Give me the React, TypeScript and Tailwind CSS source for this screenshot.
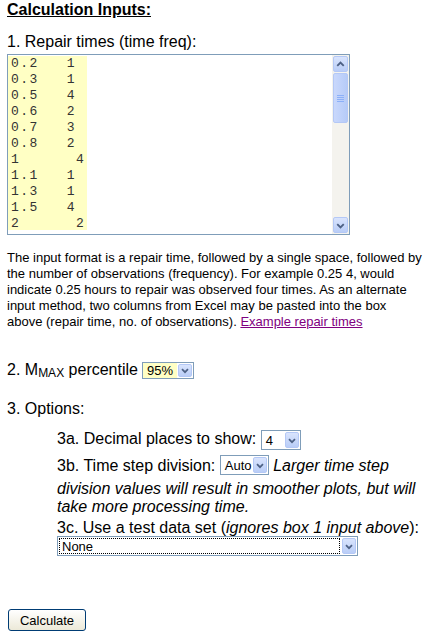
import type { ReactNode } from 'react';

const ROWS = [
  '0.2   1',
  '0.3   1',
  '0.5   4',
  '0.6   2',
  '0.7   3',
  '0.8   2',
  '1      4',
  '1.1   1',
  '1.3   1',
  '1.5   4',
  '2      2',
];

function Chevron({ up }: { up?: boolean }) {
  return (
    <svg width="14" height="15" viewBox="0 0 14 15" className="block">
      <path
        d={up ? 'M3.5 9 L7 5.5 L10.5 9' : 'M3.5 6 L7 9.5 L10.5 6'}
        fill="none"
        stroke="#4d6185"
        strokeWidth="2"
      />
    </svg>
  );
}

function ArrowBtn({ up, className = '' }: { up?: boolean; className?: string }) {
  return (
    <div
      className={`flex shrink-0 items-center justify-center rounded-[2px] border border-[#b4c8f6] bg-gradient-to-b from-[#d9e4fd] to-[#b9cdf7] ${className}`}
    >
      <Chevron up={up} />
    </div>
  );
}

interface SelectProps {
  width: string;
  children: ReactNode;
  tall?: boolean;
  yellow?: boolean;
  focused?: boolean;
}

function Select({ width, children, tall = true, yellow, focused }: SelectProps) {
  return (
    <span
      className={`inline-flex align-middle border border-[#7f9db9] bg-white ${width} ${tall ? 'h-[20px]' : 'h-[17px]'}`}
    >
      <span
        className={`flex-1 flex items-center pl-[4px] text-[13px] leading-none not-italic whitespace-nowrap ${yellow ? 'bg-[#ffffc4]' : ''} ${focused ? 'outline outline-1 outline-dotted outline-black -outline-offset-2' : ''}`}
      >
        {children}
      </span>
      <ArrowBtn className={`m-px w-[14px] ${tall ? 'h-[16px]' : 'h-[13px]'}`} />
    </span>
  );
}

export default function App() {
  return (
    <div className="w-[429px] h-[641px] bg-white pl-[7px] text-black font-['Liberation_Sans',Arial,sans-serif] overflow-hidden">
      <h1 className="pt-px text-[16px] leading-[18px] font-bold underline">Calculation Inputs:</h1>

      <p className="mt-[14px] text-[16px] leading-[18px]">1. Repair times (time freq):</p>

      {/* textarea with repair times */}
      <div className="mt-[3px] w-[343px] h-[181px] border border-[#7f9db9] flex bg-white">
        <div className="flex-1 pt-px">
          <pre className="w-[79px] h-[174px] overflow-hidden bg-[#ffffc4] pl-[3px] text-[13px] tracking-[1.5px] leading-[16px] text-[#333] font-['Liberation_Mono','Courier_New',monospace]">
            {ROWS.join('\n')}
          </pre>
        </div>
        <div className="w-[17px] flex flex-col bg-[#f4f3ee] p-px">
          <ArrowBtn up className="h-[16px]" />
          <div className="mt-px h-[50px] rounded-[2px] border border-[#b4c8f6] bg-gradient-to-r from-[#c9d8fc] to-[#b6cbf8] flex flex-col items-center justify-center gap-px">
            <span className="block w-[7px] h-px bg-[#8cb0f8]" />
            <span className="block w-[7px] h-px bg-[#8cb0f8]" />
            <span className="block w-[7px] h-px bg-[#8cb0f8]" />
            <span className="block w-[7px] h-px bg-[#8cb0f8]" />
          </div>
          <div className="flex-1" />
          <ArrowBtn className="h-[16px]" />
        </div>
      </div>

      <p className="mt-[15px] w-[418px] text-[13px] leading-[16px]">
        The input format is a repair time, followed by a single space, followed by the number of
        observations (frequency). For example 0.25 4, would indicate 0.25 hours to repair was
        observed four times. As an alternate input method, two columns from Excel may be pasted into
        the box above (repair time, no. of observations).{' '}
        <a href="#" className="text-[#800080] underline">
          Example repair times
        </a>
      </p>

      <div className="mt-[31px] flex items-center h-[18px] text-[16px] leading-[18px]">
        <span>
          2. M<span className="text-[12px] relative top-[2px]">MAX</span> percentile
        </span>
        <span className="ml-[4px] flex">
          <Select width="w-[52px]" tall={false} yellow>
            95%
          </Select>
        </span>
      </div>

      <p className="mt-[21px] text-[16px] leading-[18px]">3. Options:</p>

      <div className="mt-[11px] pl-[50px] w-[415px] text-[16px] leading-[18.4px]">
        <div>
          3a. Decimal places to show:{' '}
          <span className="inline-block align-middle my-[1px]">
            <Select width="w-[40px]">4</Select>
          </span>
        </div>
        <div className="mt-[2px]">
          3b. Time step division:{' '}
          <span className="inline-block align-middle mt-[2px] mb-[5px]">
            <Select width="w-[49px]">Auto</Select>
          </span>{' '}
          <i>
            Larger time step division values will result in smoother plots, but will take more
            processing time.
          </i>
        </div>
        <div className="mt-[2px]">
          3c. Use a test data set (<i>ignores box 1 input above</i>):
        </div>
        <div className="flex -mt-px">
          <Select width="w-[301px]" focused>
            None
          </Select>
        </div>
      </div>

      <button
        type="button"
        className="mt-[53px] ml-px w-[78px] h-[22px] rounded-[3px] border border-[#003c74] bg-gradient-to-b from-white to-[#ece9d8] text-[13px] leading-none text-black"
      >
        Calculate
      </button>
    </div>
  );
}
